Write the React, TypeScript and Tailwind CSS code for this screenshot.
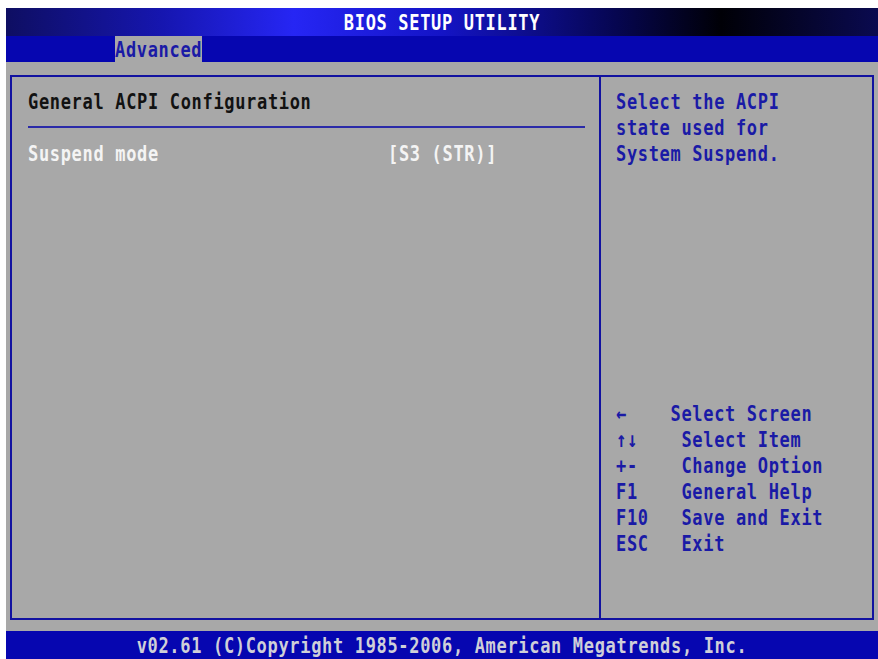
import React from "react";

const mono = "font-['DejaVu_Sans_Mono','Liberation_Mono',monospace] font-bold text-[17px] tracking-[0.67px] whitespace-pre";

function T({ children, className = "" }: { children: React.ReactNode; className?: string }) {
  // Tall, narrow glyphs like a text-mode font
  return <span className={`inline-block scale-y-[1.28] origin-center ${className}`}>{children}</span>;
}

const keys: [string, string][] = [
  ["←    ", "Select Screen"],
  ["↑↓    ", "Select Item"],
  ["+-    ", "Change Option"],
  ["F1    ", "General Help"],
  ["F10   ", "Save and Exit"],
  ["ESC   ", "Exit"],
];

export default function App() {
  return (
    <div className={`w-[878px] h-[659px] bg-white pt-[8px] pl-[6px] ${mono}`}>
      <div className="w-[872px] h-[651px] flex flex-col">
        {/* title bar */}
        <div className="h-[28px] flex items-center justify-center text-white leading-[28px] bg-[linear-gradient(to_right,#0e0e62_0%,#1616b0_18%,#2626f4_33%,#1414c6_50%,#060650_70%,#000006_82%,#0a0a50_100%)]">
          <T>BIOS SETUP UTILITY</T>
        </div>
        {/* menu bar */}
        <div className="h-[26px] bg-[#0606b0] flex items-stretch">
          <div className="ml-[109px] w-[87px] bg-[#a8a8a8] text-[#1a1aa6] leading-[26px]">
            <T>Advanced</T>
          </div>
        </div>
        {/* main area */}
        <div className="flex-1 bg-[#a8a8a8] pt-[13px] pl-[4px]">
          <div className="w-[864px] h-[545px] border-2 border-[#1212a0] flex">
            {/* left panel */}
            <div className="w-[587px] pt-[10.5px] pl-[16px]">
              <div className="h-[26px] leading-[26px] text-[#121212]">
                <T>General ACPI Configuration</T>
              </div>
              <div className="h-[26px] flex items-center">
                <div className="w-[557px] h-[2px] bg-[#2a2aa8]" />
              </div>
              <div className="h-[26px] leading-[26px] text-[#f4f4f4] flex">
                <div className="w-[360px]">
                  <T>Suspend mode</T>
                </div>
                <T>[S3 (STR)]</T>
              </div>
            </div>
            {/* right panel */}
            <div className="flex-1 border-l-2 border-[#1212a0] pt-[10.5px] pl-[15px] text-[#1a1aa6]">
              <div className="leading-[26px]">
                <div className="h-[26px]"><T>Select the ACPI</T></div>
                <div className="h-[26px]"><T>state used for</T></div>
                <div className="h-[26px]"><T>System Suspend.</T></div>
              </div>
              <div className="mt-[234px] leading-[26px]">
                {keys.map(([k, d]) => (
                  <div key={d} className="h-[26px]">
                    <T>{k + d}</T>
                  </div>
                ))}
              </div>
            </div>
          </div>
        </div>
        {/* footer */}
        <div className="h-[28px] bg-[#0606b0] text-[#cfcfd8] flex items-center justify-center leading-[28px]">
          <T className="font-semibold">v02.61 (C)Copyright 1985-2006, American Megatrends, Inc.</T>
        </div>
      </div>
    </div>
  );
}
